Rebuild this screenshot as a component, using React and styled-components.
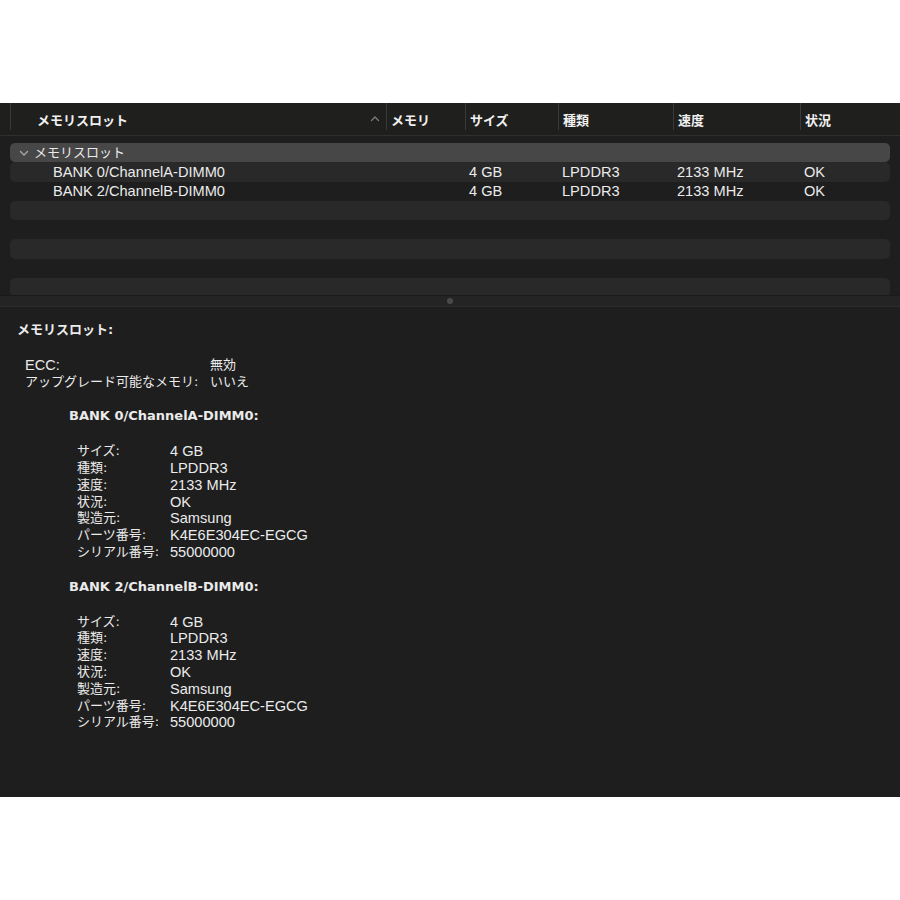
import React from 'react';
import styled, { createGlobalStyle } from 'styled-components';

const GlobalStyle = createGlobalStyle`
  body {
    margin: 0;
    background: #ffffff;
    font-family: "DejaVu Sans", "Noto Sans CJK JP", sans-serif;
  }
`;

const COLS = '10px 376px 79px 93px 115px 127px 1fr';

const isLatin = s => /^[\x00-\x7F]+$/.test(s);

const Window = styled.div`
  margin-top: 103px;
  height: 694px;
  background: #1e1e1e;
  display: flex;
  flex-direction: column;
  color: #ebebeb;
  font-size: 13px;
`;

// Latin strings use a Helvetica-width face a touch larger than the kana
const Text = styled.span`
  white-space: nowrap;
  ${p => p.$latin && `
    font-family: "Liberation Sans", "Noto Sans CJK JP", sans-serif;
    font-size: 14.6px;
  `}
`;

const Header = styled.div`
  height: 32px;
  display: grid;
  grid-template-columns: ${COLS};
  background: #1f1f1d;
  border-bottom: 1px solid #2f2f2c;
  flex-shrink: 0;
`;

const HeadCell = styled.div`
  display: flex;
  align-items: center;
  padding: 5px 10px 0 ${p => p.$indent || 4}px;
  margin-bottom: 5px;
  border-left: 1px solid ${p => (p.$sep ? '#3a3a38' : 'transparent')};
  font-weight: bold;
  color: #f0f0f0;
`;

const SortMark = styled.svg`
  margin-left: auto;
  margin-right: -4px;
  width: 10px;
  height: 8px;
`;

const List = styled.div`
  height: 152px;
  overflow: hidden;
  padding-top: 7px;
  flex-shrink: 0;
`;

const Row = styled.div`
  height: 19.3px;
  margin: 0 10px;
  border-radius: 5px;
  display: grid;
  grid-template-columns: 376px 79px 93px 115px 127px 1fr;
  align-items: center;
  line-height: 16px;
  background: ${p => (p.$selected ? '#474747' : p.$stripe ? '#292929' : 'transparent')};
`;

const Cell = styled.div`
  padding-left: ${p => p.$indent || 4}px;
  white-space: nowrap;
  display: flex;
  align-items: center;
`;

const Chevron = styled.svg`
  width: 10px;
  height: 8px;
  margin: 0 5px 0 5px;
`;

const Splitter = styled.div`
  height: 10px;
  background: #242424;
  border-top: 1px solid #1a1a1a;
  border-bottom: 1px solid #2c2c2c;
  display: flex;
  justify-content: center;
  align-items: center;
  flex-shrink: 0;
`;

const Dot = styled.div`
  width: 6px;
  height: 6px;
  border-radius: 50%;
  background: #4a4a4a;
`;

const Detail = styled.div`
  flex: 1;
  padding: 15px 17px;
  line-height: 16.8px;
`;

const Title = styled.div`
  font-weight: bold;
  margin-bottom: ${p => p.$gap || 18}px;
  margin-left: ${p => p.$indent || 0}px;
`;

const Props = styled.div`
  display: grid;
  grid-template-columns: ${p => p.$label}px auto;
  margin-left: ${p => p.$indent}px;
  margin-bottom: ${p => p.$gap || 18}px;
  justify-content: start;
`;

const T = ({ children }) => <Text $latin={isLatin(children)}>{children}</Text>;

const slots = [
  { name: 'BANK 0/ChannelA-DIMM0' },
  { name: 'BANK 2/ChannelB-DIMM0' },
];

const info = [
  ['サイズ:', '4 GB'],
  ['種類:', 'LPDDR3'],
  ['速度:', '2133 MHz'],
  ['状況:', 'OK'],
  ['製造元:', 'Samsung'],
  ['パーツ番号:', 'K4E6E304EC-EGCG'],
  ['シリアル番号:', '55000000'],
];

export default function App() {
  return (
    <>
      <GlobalStyle />
      <Window>
        <Header>
          <div />
          <HeadCell $sep $indent={26}>
            メモリスロット
            <SortMark viewBox="0 0 10 8">
              <path d="M1.5 5.5 L5 2 L8.5 5.5" fill="none" stroke="#7c7c7c" strokeWidth="1.3" strokeLinecap="round" strokeLinejoin="round" />
            </SortMark>
          </HeadCell>
          <HeadCell $sep>メモリ</HeadCell>
          <HeadCell $sep>サイズ</HeadCell>
          <HeadCell $sep>種類</HeadCell>
          <HeadCell $sep>速度</HeadCell>
          <HeadCell $sep>状況</HeadCell>
        </Header>

        <List>
          <Row $selected>
            <Cell $indent={0}>
              <Chevron viewBox="0 0 10 8">
                <path d="M1.5 2.5 L5 6 L8.5 2.5" fill="none" stroke="#a8a8a8" strokeWidth="1.4" strokeLinecap="round" strokeLinejoin="round" />
              </Chevron>
              メモリスロット
            </Cell>
          </Row>
          {slots.map((s, i) => (
            <Row key={s.name} $stripe={i % 2 === 0}>
              <Cell $indent={43}><T>{s.name}</T></Cell>
              <Cell />
              <Cell><T>4 GB</T></Cell>
              <Cell><T>LPDDR3</T></Cell>
              <Cell><T>2133 MHz</T></Cell>
              <Cell><T>OK</T></Cell>
            </Row>
          ))}
          {[0, 1, 2, 3, 4].map(i => (
            <Row key={i} $stripe={i % 2 === 0} />
          ))}
        </List>

        <Splitter>
          <Dot />
        </Splitter>

        <Detail>
          <Title $gap={18}>メモリスロット:</Title>
          <Props $label={185} $indent={8}>
            <T>ECC:</T>
            <T>無効</T>
            <T>アップグレード可能なメモリ:</T>
            <T>いいえ</T>
          </Props>
          {slots.map(s => (
            <React.Fragment key={s.name}>
              <Title $indent={52}>{s.name}:</Title>
              <Props $label={93} $indent={60}>
                {info.map(([k, v]) => (
                  <React.Fragment key={k}>
                    <T>{k}</T>
                    <T>{v}</T>
                  </React.Fragment>
                ))}
              </Props>
            </React.Fragment>
          ))}
        </Detail>
      </Window>
    </>
  );
}
